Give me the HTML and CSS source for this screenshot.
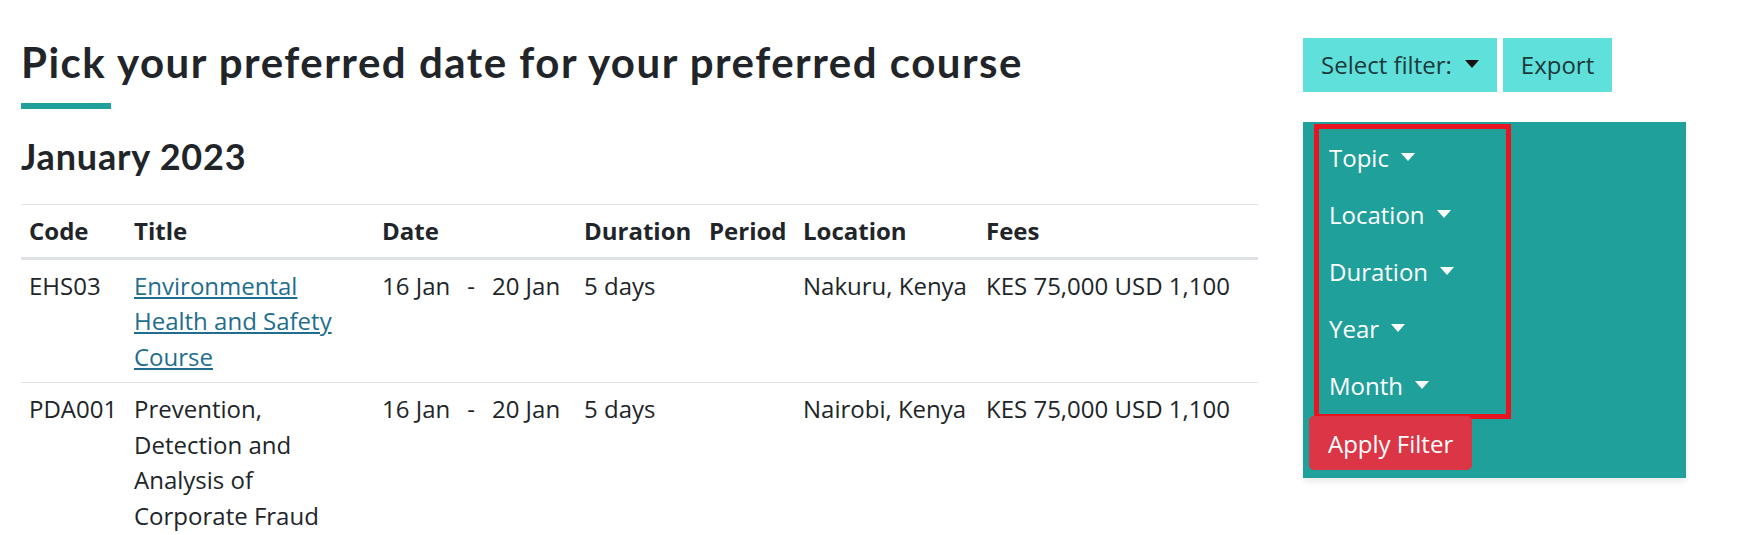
FILE: index.html
```html
<!DOCTYPE html>
<html lang="en">
<head>
<meta charset="utf-8">
<title>Course dates</title>
<link rel="stylesheet" href="styles.css">
</head>
<body>
<div class="page">
  <main class="main">
    <h1 class="title">Pick your preferred date for your preferred course</h1>
    <div class="title-bar"></div>
    <h2 class="month">January 2023</h2>
    <table class="courses">
      <colgroup>
        <col class="c-code"><col class="c-title"><col class="c-date"><col class="c-dur"><col class="c-period"><col class="c-loc"><col class="c-fees">
      </colgroup>
      <thead>
        <tr><th>Code</th><th>Title</th><th>Date</th><th>Duration</th><th>Period</th><th>Location</th><th>Fees</th></tr>
      </thead>
      <tbody>
        <tr>
          <td>EHS03</td>
          <td><div class="course-name"><a href="#">Environmental Health and Safety Course</a></div></td>
          <td><span>16 Jan</span><span class="dash">-</span><span>20 Jan</span></td>
          <td>5 days</td>
          <td></td>
          <td>Nakuru, Kenya</td>
          <td>KES 75,000 USD 1,100</td>
        </tr>
        <tr>
          <td>PDA001</td>
          <td><div class="course-name">Prevention, Detection and Analysis of Corporate Fraud</div></td>
          <td><span>16 Jan</span><span class="dash">-</span><span>20 Jan</span></td>
          <td>5 days</td>
          <td></td>
          <td>Nairobi, Kenya</td>
          <td>KES 75,000 USD 1,100</td>
        </tr>
      </tbody>
    </table>
  </main>
  <aside class="side">
    <div class="toolbar">
      <button class="btn-cyan caret">Select filter:</button>
      <button class="btn-cyan">Export</button>
    </div>
    <div class="filter-panel">
      <ul class="filter-list">
        <li class="caret">Topic</li>
        <li class="caret">Location</li>
        <li class="caret">Duration</li>
        <li class="caret">Year</li>
        <li class="caret">Month</li>
      </ul>
      <button class="btn-apply">Apply Filter</button>
    </div>
  </aside>
</div>
</body>
</html>
```
FILE: styles.css
```css
* { box-sizing: border-box; }
html, body { margin: 0; padding: 0; background: #fff; }
body {
  font-family: "Open Sans", "Noto Sans", sans-serif;
  color: #212529;
  font-size: 24px;
  line-height: 35.5px;
}
.page {
  display: flex;
  align-items: flex-start;
  padding-left: 21px;
  gap: 45px;
}
.main { width: 1237px; flex: none; }
.title {
  font-family: "Lato", sans-serif;
  font-weight: 700;
  font-size: 42px;
  letter-spacing: 1.5px;
  line-height: 50px;
  margin: 37px 0 0 0;
  color: #212529;
}
.title-bar {
  width: 90px;
  height: 6px;
  background: #20a09b;
  margin-top: 16px;
}
.month {
  font-family: "Lato", sans-serif;
  font-weight: 700;
  font-size: 36px;
  letter-spacing: 0.8px;
  line-height: 44px;
  margin: 25px 0 0 0;
  color: #212529;
}
.courses {
  width: 100%;
  border-collapse: collapse;
  table-layout: fixed;
  margin-top: 26px;
}
.c-code { width: 105px; }
.c-title { width: 248px; }
.c-date { width: 202px; }
.c-dur { width: 125px; }
.c-period { width: 94px; }
.c-loc { width: 183px; }
.c-fees { width: 280px; }
.courses th, .courses td {
  text-align: left;
  vertical-align: top;
  padding: 8px 8px;
  border-top: 1px solid #dee2e6;
  white-space: nowrap;
}
.courses th { font-weight: 700; border-bottom: 3px solid #dee2e6; }
.courses td:nth-child(2) { white-space: normal; }
.course-name { max-width: 210px; }
.course-name a { color: #1f6e8f; text-decoration: underline; }
.dash { margin: 0 17px; }
.side { width: 383px; flex: none; padding-top: 38px; }
.toolbar { display: flex; gap: 6px; }
.btn-cyan {
  font-family: "Open Sans", sans-serif;
  font-size: 24px;
  color: #1c3a3d;
  background: #5fe0da;
  border: 0;
  height: 54px;
  padding: 0 18px;
  line-height: 54px;
}
.caret::after {
  content: "";
  display: inline-block;
  margin-left: 12px;
  vertical-align: 6px;
  border-top: 8px solid currentColor;
  border-left: 7px solid transparent;
  border-right: 7px solid transparent;
}
.btn-cyan.caret::after { color: #111; margin-left: 13px; }
.filter-panel {
  margin-top: 30px;
  background: #20a09b;
  padding: 2px 0 8px 6px;
  box-shadow: 0 4px 6px rgba(0,0,0,0.08);
}
.filter-list {
  list-style: none;
  margin: 0 0 0 5px;
  padding: 0;
  width: 197px;
  border: 5px solid #e8141f;
}
.filter-list li {
  color: #fff;
  height: 57px;
  line-height: 57px;
  padding-left: 10px;
}
.btn-apply {
  display: block;
  margin-top: -3px;
  font-family: "Open Sans", sans-serif;
  font-size: 24px;
  color: #fff;
  background: #dc3545;
  border: 0;
  border-radius: 5px;
  height: 54px;
  padding: 0 19px;
}
```
